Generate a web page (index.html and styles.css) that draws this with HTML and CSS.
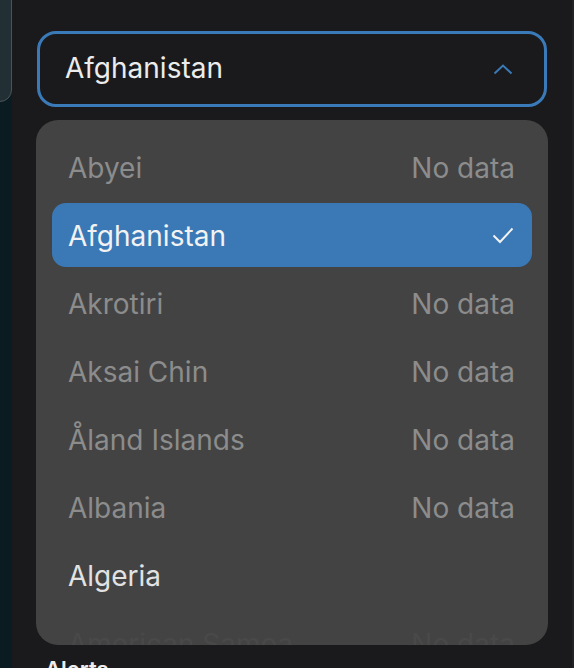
FILE: index.html
```html
<!DOCTYPE html>
<html lang="en">
<head>
<meta charset="utf-8">
<title>Country select</title>
<link rel="stylesheet" href="styles.css">
</head>
<body>
<div class="app">
  <div class="side">
    <div class="side-card"></div>
  </div>
  <main class="panel">
    <div class="select">
      <span class="select-value">Afghanistan</span>
      <svg class="chevron" width="20" height="12" viewBox="0 0 20 12"><path d="M1.5 10.5 L10 2.5 L18.5 10.5" fill="none" stroke="#3a7ab8" stroke-width="2"/></svg>
    </div>
    <div class="menu">
      <div class="row muted"><span>Abyei</span><span>No data</span></div>
      <div class="row selected"><span>Afghanistan</span>
        <svg class="check" width="22" height="17" viewBox="0 0 22 17"><path d="M1.5 8.5 L8 15 L20.5 1.5" fill="none" stroke="#f2f2f2" stroke-width="2"/></svg>
      </div>
      <div class="row muted"><span>Akrotiri</span><span>No data</span></div>
      <div class="row muted"><span>Aksai Chin</span><span>No data</span></div>
      <div class="row muted"><span>Åland Islands</span><span>No data</span></div>
      <div class="row muted"><span>Albania</span><span>No data</span></div>
      <div class="row"><span>Algeria</span></div>
      <div class="row faded"><span>American Samoa</span><span>No data</span></div>
    </div>
    <h2 class="section">Alerts</h2>
  </main>
  <div class="edge"></div>
</div>
</body>
</html>
```
FILE: styles.css
```css
* { box-sizing: border-box; }
html, body {
  margin: 0;
  height: 100%;
  overflow: hidden;
  background: #1a1a1c;
  font-family: Inter, "Noto Sans", sans-serif;
}
.app {
  display: flex;
  height: 668px;
}
.side {
  width: 12px;
  flex: none;
  background: #0a1c22;
}
.side-card {
  height: 112px;
  margin-top: -10px;
  margin-left: -20px;
  width: 32px;
  background: #223035;
  border: 1px solid #4a5458;
  border-radius: 0 0 12px 0;
}
.panel {
  flex: 1;
  padding: 31px 0 0 24px;
  background: #1a1a1c;
  overflow: hidden;
}
.edge {
  width: 2px;
  flex: none;
  background: #222224;
}
.select {
  margin-left: 1px;
  width: 510px;
  height: 76px;
  border: 3px solid #3a7ab8;
  border-radius: 19px;
  display: flex;
  align-items: center;
  justify-content: space-between;
  padding: 0 31px 0 25px;
}
.select-value {
  color: #ececec;
  font-size: 28px;
  margin-top: -2px;
}
.chevron { margin-top: 0; }
.menu {
  margin-top: 13px;
  width: 512px;
  height: 525px;
  background: #434343;
  border-radius: 22px;
  padding: 15px 16px 0;
  display: flex;
  flex-direction: column;
  gap: 4px;
  overflow: hidden;
}
.row {
  flex: none;
  height: 64px;
  display: flex;
  align-items: center;
  justify-content: space-between;
  padding: 2px 17px 0 16px;
  border-radius: 14px;
  font-size: 28px;
  color: #e2e2e2;
}
.row.muted { color: #8c8c8c; }
.row.faded { color: #494949; }
.row.selected {
  background: #3a79b6;
  color: #f2f2f2;
}
.check { margin: -2px 1px 0 0; }
.section {
  margin: 12px 0 0 9px;
  font-size: 22px;
  font-weight: 600;
  color: #ededed;
  line-height: 24px;
}
```
